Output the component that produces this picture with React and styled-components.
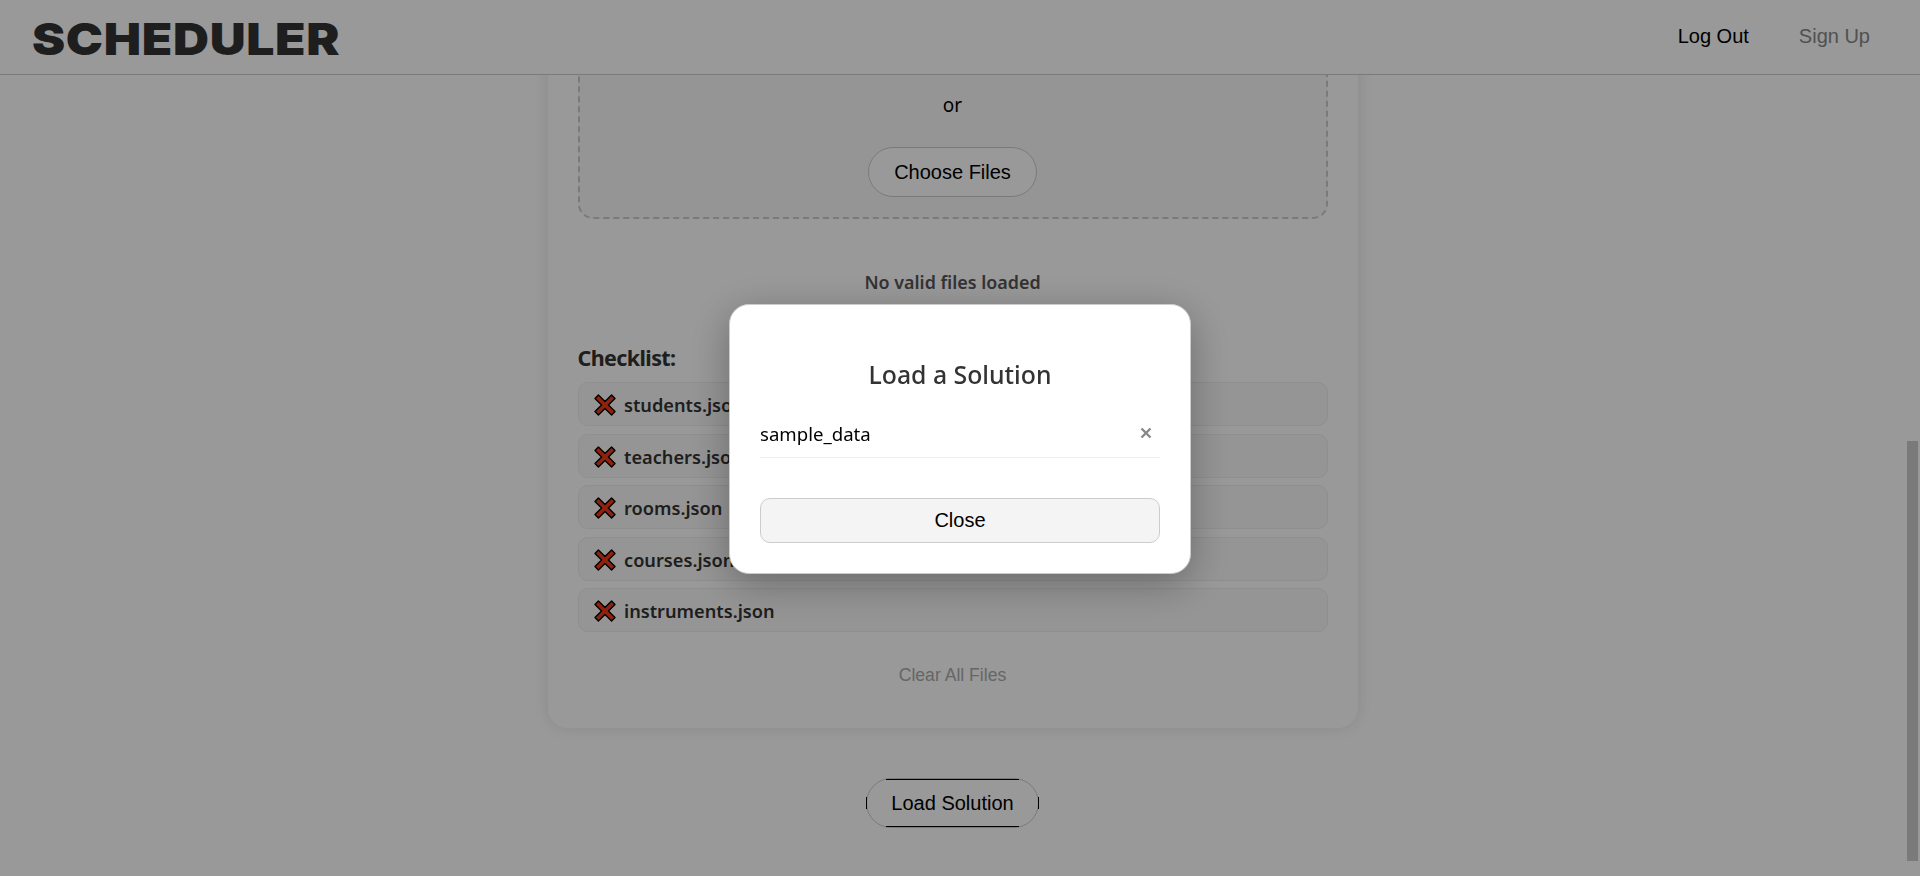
import React from 'react';
import styled, { createGlobalStyle } from 'styled-components';

const GlobalStyle = createGlobalStyle`
  *, *::before, *::after { box-sizing: border-box; }
  html, body { margin: 0; height: 100%; overflow: hidden; background: #fff; }
  body { font-family: 'Noto Sans', 'Open Sans', sans-serif; color: #000; }
  button { font-family: 'Liberation Sans', Arial, sans-serif; margin: 0; }
`;

const Page = styled.div`
  display: flex;
  flex-direction: column;
  height: 876px;
`;

const Header = styled.header`
  position: relative;
  z-index: 1;
  flex: none;
  display: flex;
  justify-content: space-between;
  align-items: center;
  height: 75px;
  padding: 0 50px 0 32px;
  background: #fff;
  border-bottom: 1px solid #ccc;
`;

const Logo = styled.h1`
  margin: 5px 0 0;
  font: 900 44.6px/1 Inter, sans-serif;
  letter-spacing: 0.6px;
  transform: scaleX(1.117);
  transform-origin: left;
  color: #333;
`;

const Nav = styled.nav`
  display: flex;
  gap: 50px;
  margin-bottom: 2px;
`;

const NavLink = styled.a`
  font: 20px/24px 'Liberation Sans', Arial, sans-serif;
  color: ${(p) => (p.$muted ? '#888' : '#000')};
`;

const Body = styled.div`
  flex: 1;
  min-height: 0;
  display: flex;
`;

const Main = styled.main`
  flex: 1;
  overflow: hidden;
  display: flex;
  flex-direction: column;
  justify-content: flex-end;
  align-items: center;
  padding-bottom: 48px;
`;

const ScrollTrack = styled.div`
  width: 15px;
  padding: 366px 2px 0;
`;

const ScrollThumb = styled.div`
  height: 420px;
  background: #cbcbcb;
`;

const Card = styled.section`
  flex: none;
  width: 810px;
  padding: 30px 30px 40px;
  margin-bottom: 50px;
  border-radius: 20px;
  background: #fff;
  box-shadow: 0 0 15px rgba(0, 0, 0, 0.1);
  display: flex;
  flex-direction: column;
`;

const DropZone = styled.div`
  display: flex;
  flex-direction: column;
  align-items: center;
  justify-content: flex-end;
  height: 240px;
  padding-bottom: 20px;
  border: 2px dashed #ccc;
  border-radius: 15px;
  background: #f9f9f9;
`;

const OrText = styled.p`
  margin: 0 0 29px;
  font-size: 19px;
  line-height: 26px;
`;

const PillButton = styled.button`
  width: ${(p) => p.$width}px;
  height: ${(p) => p.$height}px;
  padding: 0;
  border: 1px solid #ccc;
  border-radius: 25px;
  background: #fff;
  font-size: 20px;
  color: #000;
`;

const FocusedPill = styled(PillButton)`
  position: relative;
  flex: none;

  &::before {
    content: '';
    position: absolute;
    inset: 0 19px;
    border: solid #000;
    border-width: 1px 0;
  }

  &::after {
    content: '';
    position: absolute;
    inset: 18px -1px;
    border: solid #000;
    border-width: 0 1px;
  }
`;

const Status = styled.p`
  margin: 50px 0 0;
  text-align: center;
  font-size: 17.9px;
  font-weight: 600;
  line-height: 26px;
  color: #555;
`;

const ChecklistTitle = styled.h3`
  margin: 47px 0 0;
  font-size: 21.5px;
  font-weight: 700;
  letter-spacing: -0.6px;
  line-height: 32px;
  color: #333;
`;

const Checklist = styled.ul`
  list-style: none;
  margin: 8px 0 0;
  padding: 0;
  display: flex;
  flex-direction: column;
  gap: 7.9px;
`;

const ChecklistItem = styled.li`
  display: flex;
  align-items: center;
  gap: 8.5px;
  height: 43.6px;
  padding: 2px 15px 0;
  border: 1px solid #eee;
  border-radius: 10px;
  background: #f9f9f9;
  font-size: 18.2px;
  font-weight: 600;
  color: #333;
`;

const ClearButton = styled.button`
  align-self: center;
  margin-top: 30px;
  height: 26px;
  padding: 0;
  border: 0;
  background: none;
  font-size: 17.6px;
  color: #aaa;
`;

const Overlay = styled.div`
  position: fixed;
  inset: 0;
  z-index: 10;
  display: flex;
  align-items: center;
  justify-content: center;
  padding-top: 2px;
  background: rgba(0, 0, 0, 0.4);
`;

const Modal = styled.div`
  width: 462px;
  height: 270px;
  padding: 49px 30px 30px;
  display: flex;
  flex-direction: column;
  border: 1px solid #ccc;
  border-radius: 20px;
  background: #fff;
  box-shadow: 0 10px 40px rgba(0, 0, 0, 0.3);
`;

const ModalTitle = styled.h2`
  margin: 0;
  text-align: center;
  font-size: 24.8px;
  font-weight: 500;
  line-height: 40px;
  color: #333;
`;

const SolutionRow = styled.div`
  display: flex;
  justify-content: space-between;
  align-items: center;
  height: 48px;
  margin: 16px 0 40px;
  padding: 0 8px 1px 0;
  border-bottom: 1px solid #eee;
  font-size: 18.6px;
`;

const RemoveButton = styled.button`
  display: flex;
  padding: 0;
  border: 0;
  background: none;
`;

const CloseButton = styled.button`
  height: 45px;
  padding: 0;
  border: 1px solid #ccc;
  border-radius: 10px;
  background: #f4f4f4;
  font-size: 20px;
  color: #000;
`;

const CrossMark = () => (
  <svg width="22" height="22" viewBox="0 0 22 22" aria-hidden="true">
    <path
      d="M4.4 1 L11 7.6 L17.6 1 L21 4.4 L14.4 11 L21 17.6 L17.6 21 L11 14.4 L4.4 21 L1 17.6 L7.6 11 L1 4.4 Z"
      fill="#f03a17"
      stroke="#000"
      strokeWidth="1.4"
      strokeLinejoin="round"
    />
  </svg>
);

const RemoveIcon = () => (
  <svg width="12" height="12" viewBox="0 0 12 12" aria-hidden="true">
    <path d="M1.5 1.5 L10.5 10.5 M10.5 1.5 L1.5 10.5" stroke="#888" strokeWidth="2.4" fill="none" />
  </svg>
);

const requiredFiles = [
  'students.json',
  'teachers.json',
  'rooms.json',
  'courses.json',
  'instruments.json',
];

export default function App() {
  return (
    <>
      <GlobalStyle />
      <Page>
        <Header>
          <Logo>SCHEDULER</Logo>
          <Nav>
            <NavLink>Log Out</NavLink>
            <NavLink $muted>Sign Up</NavLink>
          </Nav>
        </Header>
        <Body>
          <Main>
            <Card>
              <DropZone>
                <OrText>or</OrText>
                <PillButton $width={169} $height={50}>Choose Files</PillButton>
              </DropZone>
              <Status>No valid files loaded</Status>
              <ChecklistTitle>Checklist:</ChecklistTitle>
              <Checklist>
                {requiredFiles.map((name) => (
                  <ChecklistItem key={name}>
                    <CrossMark />
                    <span>{name}</span>
                  </ChecklistItem>
                ))}
              </Checklist>
              <ClearButton>Clear All Files</ClearButton>
            </Card>
            <FocusedPill $width={173} $height={50}>Load Solution</FocusedPill>
          </Main>
          <ScrollTrack>
            <ScrollThumb />
          </ScrollTrack>
        </Body>
      </Page>
      <Overlay>
        <Modal role="dialog">
          <ModalTitle>Load a Solution</ModalTitle>
          <SolutionRow>
            <span>sample_data</span>
            <RemoveButton aria-label="Remove">
              <RemoveIcon />
            </RemoveButton>
          </SolutionRow>
          <CloseButton>Close</CloseButton>
        </Modal>
      </Overlay>
    </>
  );
}
